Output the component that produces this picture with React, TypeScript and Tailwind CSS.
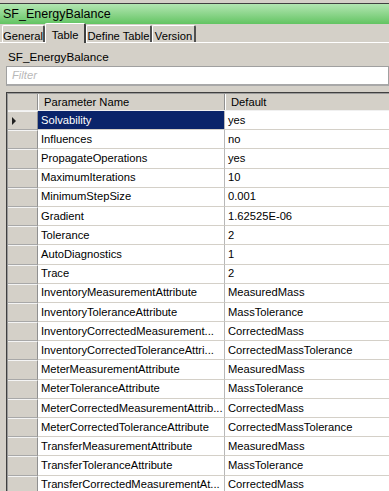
import React from "react";

const rows: [string, string][] = [
  ["Solvability", "yes"],
  ["Influences", "no"],
  ["PropagateOperations", "yes"],
  ["MaximumIterations", "10"],
  ["MinimumStepSize", "0.001"],
  ["Gradient", "1.62525E-06"],
  ["Tolerance", "2"],
  ["AutoDiagnostics", "1"],
  ["Trace", "2"],
  ["InventoryMeasurementAttribute", "MeasuredMass"],
  ["InventoryToleranceAttribute", "MassTolerance"],
  ["InventoryCorrectedMeasurement...", "CorrectedMass"],
  ["InventoryCorrectedToleranceAttri...", "CorrectedMassTolerance"],
  ["MeterMeasurementAttribute", "MeasuredMass"],
  ["MeterToleranceAttribute", "MassTolerance"],
  ["MeterCorrectedMeasurementAttrib...", "CorrectedMass"],
  ["MeterCorrectedToleranceAttribute", "CorrectedMassTolerance"],
  ["TransferMeasurementAttribute", "MeasuredMass"],
  ["TransferToleranceAttribute", "MassTolerance"],
  ["TransferCorrectedMeasurementAt...", "CorrectedMass"],
];

function Tab({ label, selected, w }: { label: string; selected?: boolean; w: string }) {
  if (selected) {
    return (
      <div
        className={`${w} h-[20px] -mb-px self-end flex items-start justify-center pt-[3px] bg-[#d4d0c8] border-l border-t border-white border-r-2 border-r-[#404040] rounded-t-[2px] z-10`}
      >
        {label}
      </div>
    );
  }
  return (
    <div
      className={`${w} h-[17px] self-end flex items-start justify-center pt-[2px] bg-[#d4d0c8] border-l border-t border-white border-r-2 border-r-[#505050] rounded-t-[2px]`}
    >
      {label}
    </div>
  );
}

export default function App() {
  return (
    <div className="w-[389px] h-[491px] overflow-hidden bg-[#d4d0c8] font-['Liberation_Sans',Arial,sans-serif] text-[11.2px] text-black">
      {/* title bar */}
      <div className="pt-[3px] bg-[#d4d0c8]">
        <div className="h-[21px] border-t border-[#404040] bg-gradient-to-b from-[#b2e6b2] to-[#62c462] flex items-center pl-[3px] text-[12.5px] leading-none">
          SF_EnergyBalance
        </div>
      </div>
      {/* tabs */}
      <div className="h-[19px] flex items-end pl-[2px] border-b border-white">
        <Tab label="General" w="w-[43px]" />
        <Tab label="Table" selected w="w-[41px]" />
        <Tab label="Define Table" w="w-[66px]" />
        <Tab label="Version" w="w-[44px]" />
      </div>
      {/* panel */}
      <div className="pl-[6px]">
        <div className="h-[21px] flex items-end pl-[2px] text-[11.7px] leading-none pb-[1px]">SF_EnergyBalance</div>
        <div className="mt-[2px] h-[20px] bg-white border border-[#a0a0a0] border-b-2 border-b-[#a8a8a8] flex items-center pl-[5px] italic text-[#b8b8b8]">
          Filter
        </div>
        <div className="h-[6px]" />
        {/* grid */}
        <div className="border-t border-l border-[#404040]">
          <div className="border-t border-l border-[#9a9a9a]">
            {/* header */}
            <div className="flex h-[17px] bg-[#d4d0c8] border-b border-[#f0f0f0]">
              <div className="w-[30px] border-r border-[#909090]" />
              <div className="w-[187px] border-l border-white border-r border-r-[#909090] pl-[5px] leading-[17px]">Parameter Name</div>
              <div className="flex-1 border-l border-white pl-[5px] leading-[17px]">Default</div>
            </div>
            {rows.map(([name, val], i) => (
              <div key={name} className="flex h-[19.2px]">
                <div className="w-[30px] bg-[#d4d0c8] border-t border-[#f4f4f4] border-b border-b-[#a8a8a8] border-r border-r-[#909090] flex items-center pl-[4px]">
                  {i === 0 && (
                    <svg width="5" height="8" viewBox="0 0 5 8">
                      <polygon points="0,0 4,4 0,8" fill="#202020" />
                    </svg>
                  )}
                </div>
                <div
                  className={`w-[187px] border-b border-[#d4d0c8] border-r border-r-[#b8b8b8] pl-[3px] flex items-center whitespace-nowrap overflow-hidden ${
                    i === 0 ? "bg-[#0a246a] text-white" : "bg-white"
                  }`}
                >
                  {name}
                </div>
                <div className="flex-1 bg-white border-b border-[#d4d0c8] pl-[3px] flex items-center whitespace-nowrap">
                  {val}
                </div>
              </div>
            ))}
          </div>
        </div>
      </div>
    </div>
  );
}
